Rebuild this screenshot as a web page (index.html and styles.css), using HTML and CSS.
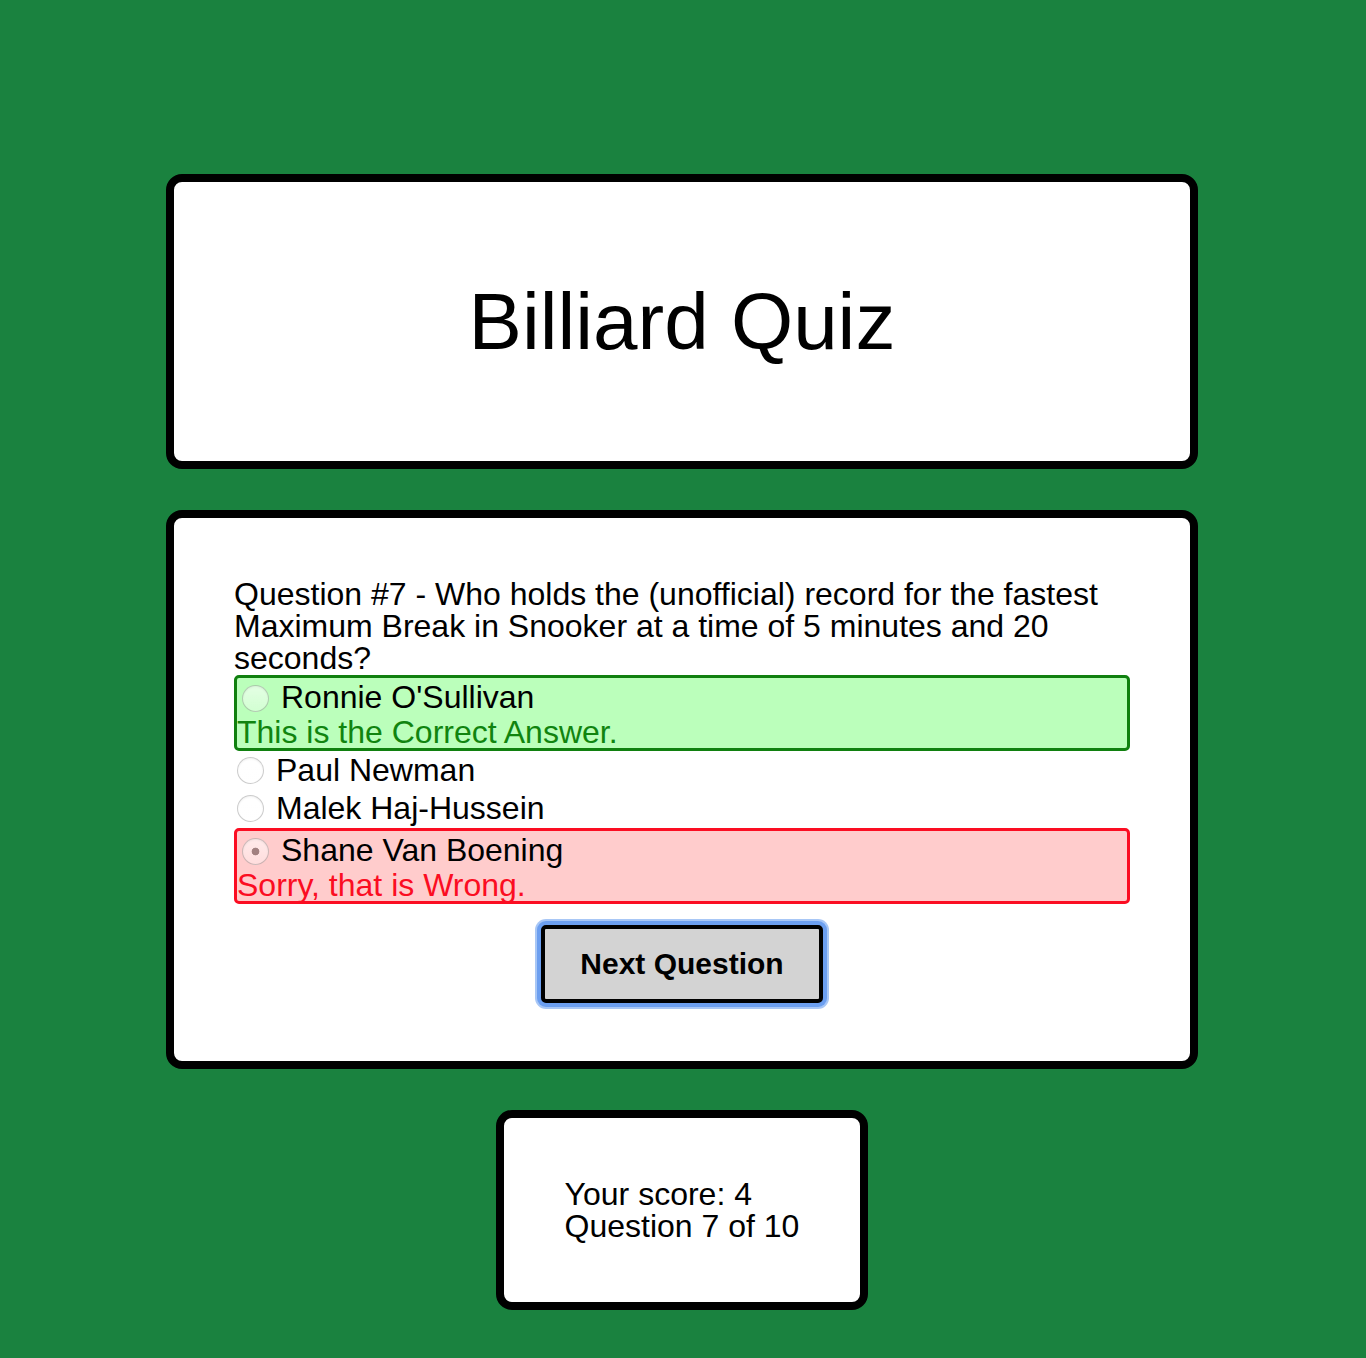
FILE: index.html
```html
<!DOCTYPE html>
<html lang="en">
<head>
<meta charset="utf-8">
<title>Billiard Quiz</title>
<link rel="stylesheet" href="styles.css">
</head>
<body>
<main class="page">
  <header class="card title-card">
    <h1 class="title">Billiard Quiz</h1>
  </header>

  <section class="card quiz-card">
    <p class="question">Question #7 - Who holds the (unofficial) record for the fastest Maximum Break in Snooker at a time of 5 minutes and 20 seconds?</p>
    <div class="answers">
      <div class="answer answer--correct">
        <label class="answer-row"><input type="radio" name="q7" class="radio" disabled><span class="answer-text">Ronnie O'Sullivan</span></label>
        <div class="feedback feedback--correct">This is the Correct Answer.</div>
      </div>
      <div class="answer answer--plain">
        <label class="answer-row"><input type="radio" name="q7" class="radio" disabled><span class="answer-text">Paul Newman</span></label>
      </div>
      <div class="answer answer--plain">
        <label class="answer-row"><input type="radio" name="q7" class="radio" disabled><span class="answer-text">Malek Haj-Hussein</span></label>
      </div>
      <div class="answer answer--wrong">
        <label class="answer-row"><input type="radio" name="q7" class="radio" checked disabled><span class="answer-text">Shane Van Boening</span></label>
        <div class="feedback feedback--wrong">Sorry, that is Wrong.</div>
      </div>
    </div>
    <div class="actions">
      <button type="button" class="next-btn">Next Question</button>
    </div>
  </section>

  <section class="card score-card">
    <p class="score-text">Your score: 4<br>Question 7 of 10</p>
  </section>
</main>
</body>
</html>
```

FILE: styles.css
```css
html, body {
  margin: 0;
  padding: 0;
}

body {
  background: #1a823f;
  font-family: "Liberation Sans", Arial, Helvetica, sans-serif;
  color: #000;
}

.page {
  display: flex;
  flex-direction: column;
  align-items: center;
  gap: 41px;
  padding: 174px 2px 49px 0;
}

.card {
  background: #fff;
  border: 8px solid #000;
  border-radius: 16px;
  box-sizing: border-box;
}

.title-card {
  width: 1032px;
  padding: 99px 60px;
  text-align: center;
}

.title {
  margin: 0;
  font-size: 80px;
  font-weight: normal;
  line-height: 81px;
}

.quiz-card {
  width: 1032px;
  padding: 60px 60px 58px;
  font-size: 32px;
  line-height: 32px;
}

.question {
  margin: 0 0 1px;
}

.answers {
  display: flex;
  flex-direction: column;
}

.answer--correct,
.answer--wrong {
  border: 3px solid;
  border-radius: 5px;
}

.answer--correct {
  background: #bbffbb;
  border-color: #10800f;
}

.answer--wrong {
  margin-top: 1px;
  background: #ffcccc;
  border-color: #fb0d22;
}

.answer-row {
  display: flex;
  align-items: center;
  height: 38px;
}

.radio {
  appearance: none;
  -webkit-appearance: none;
  width: 27px;
  height: 27px;
  margin: 0 12px 0 3px;
  border-radius: 50%;
  border: 1px solid rgba(0, 0, 0, 0.2);
  background: linear-gradient(rgba(255, 255, 255, 0.6), rgba(255, 255, 255, 0.35));
  box-shadow: inset 0 1px 2px rgba(0, 0, 0, 0.06);
  box-sizing: border-box;
  flex: none;
}

.answer--correct .radio,
.answer--wrong .radio {
  margin-left: 5px;
  margin-top: 2px;
}

.radio:checked {
  background:
    radial-gradient(circle, rgba(70, 30, 30, 0.5) 0 3.5px, transparent 4.2px),
    linear-gradient(rgba(255, 255, 255, 0.6), rgba(255, 255, 255, 0.35));
}

.feedback {
  height: 32px;
}

.feedback--correct {
  color: #10840f;
}

.feedback--wrong {
  color: #fb0d22;
}

.actions {
  display: flex;
  justify-content: center;
  margin-top: 21px;
}

.next-btn {
  width: 282px;
  box-sizing: border-box;
  padding: 19px 0;
  background: #d3d3d3;
  border: 4px solid #000;
  border-radius: 5px;
  font-family: "Liberation Sans", Arial, Helvetica, sans-serif;
  font-size: 30px;
  font-weight: bold;
  line-height: 32px;
  color: #000;
  box-shadow: 0 0 0 4px #6c9ff0, 0 0 0 6px #a8c7f6;
}

.score-card {
  padding: 60px 61px;
  font-size: 32px;
  line-height: 32px;
}

.score-text {
  margin: 0;
}
```
